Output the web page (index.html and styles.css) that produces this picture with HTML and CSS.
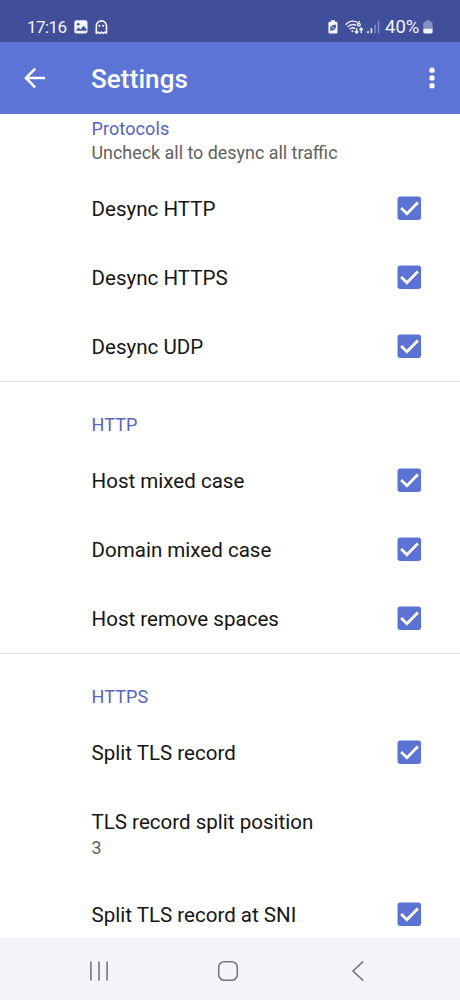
FILE: index.html
```html
<!DOCTYPE html>
<html lang="en">
<head>
<meta charset="utf-8">
<title>Settings</title>
<link rel="stylesheet" href="styles.css">
</head>
<body>
<svg class="defs" width="0" height="0">
  <symbol id="check" viewBox="0 0 24 24"><rect x="0.5" y="0.5" width="22.6" height="22.6" rx="2.6" fill="#5d72d5"/><path d="M4 11.600l5.500 5.500L20 6.200" fill="none" stroke="#fff" stroke-width="2.700"/></symbol>
</svg>
<div class="screen">
  <header class="status">
    <span class="clock">17:16</span>
    <svg class="s-image" width="14" height="14" viewBox="0 0 14 14"><rect x="0.3" y="0.3" width="13.2" height="13.2" rx="2.2" fill="#f1f4ff"/><circle cx="4.2" cy="4.2" r="1.3" fill="#414f9b"/><path d="M1.8 10.8l2.8-3.2 2 1.8 3-3.6 3 3.8v1.2z" fill="#414f9b"/></svg>
    <svg class="s-ghost" width="13" height="15" viewBox="0 0 13 15"><path d="M1.3 13.3V6a5.1 5.1 0 0 1 10.2 0v7.3l-1.8-1.2-1.6 1.4-1.7-1.4-1.7 1.4-1.6-1.4z" fill="none" stroke="#f1f4ff" stroke-width="1.6" stroke-linejoin="round"/><circle cx="4.4" cy="5.8" r="1.1" fill="#f1f4ff"/><circle cx="8.2" cy="5.8" r="1.1" fill="#f1f4ff"/></svg>
    <svg class="s-saver" width="10" height="14" viewBox="0 0 10 14"><path d="M3 .2h4v1.5h1.2A1.3 1.3 0 0 1 9.5 3v9.3a1.3 1.3 0 0 1-1.3 1.3H1.7A1.3 1.3 0 0 1 .4 12.3V3a1.3 1.3 0 0 1 1.3-1.3H3z" fill="#f1f4ff"/><path d="M2.3 10.5l4.800-4.800M2.700 8.800C2.300 6.500 4.500 5.400 7.400 5.400 7.500 8.500 6 10.400 3.600 9.700" fill="none" stroke="#414f9b" stroke-width="1.1"/></svg>
    <svg class="s-wifi" width="19" height="15" viewBox="0 0 19 15" fill="none" stroke="#f1f4ff" stroke-width="1.3"><path d="M.6 4.800C4 1 8.500.5 12 2.200M2.600 7.100C5 4.500 8.500 4 11.200 5.400M4.600 9.300C6.200 7.700 8.400 7.500 10 8.600"/><circle cx="7.400" cy="11.200" r="1" fill="#f1f4ff" stroke="none"/><path d="M14.800 1C13.200 2 12.500 3.300 12.500 4.700"/><circle cx="13.900" cy="4.800" r="1.400"/><path d="M11.600 8v5M9.800 11.300l1.800 2 1.800-2M16.200 13.300v-5M14.500 10l1.700-2 1.700 2"/></svg>
    <svg class="s-signal" width="13" height="14" viewBox="0 0 13 14"><path d="M1 11v2.300M4.400 8.300v5" stroke="#f1f4ff" stroke-width="1.500"/><path d="M8 4.800v8.500M11.500 .8v12.500" stroke="#8690c6" stroke-width="1.400"/></svg>
    <span class="percent">40%</span>
    <svg class="s-battery" width="10" height="14" viewBox="0 0 10 14"><path d="M3 .3h4v1.500h1.100A1.500 1.500 0 0 1 9.600 3.300V9H.3V3.300A1.500 1.500 0 0 1 1.800 1.800H3z" fill="#8790c3"/><path d="M.3 8.700h9.300v3.400a1.400 1.400 0 0 1-1.400 1.400H1.700A1.400 1.400 0 0 1 .3 12.100z" fill="#f1f4ff"/></svg>
  </header>
  <div class="appbar">
    <svg class="back" width="22" height="22" viewBox="0 0 22 22" fill="none" stroke="#fff" stroke-width="2.500"><path d="M21 11H2.500M11.200 1.700L1.900 11l9.300 9.300"/></svg>
    <h1>Settings</h1>
    <svg class="more" width="8" height="22" viewBox="0 0 8 22" fill="#fff"><circle cx="4" cy="3.300" r="2.700"/><circle cx="4" cy="11" r="2.700"/><circle cx="4" cy="18.700" r="2.700"/></svg>
  </div>
  <main>
    <section class="first">
      <div class="intro"><h2>Protocols</h2><p>Uncheck all to desync all traffic</p></div>
      <div class="row"><span>Desync HTTP</span><svg class="box"><use href="#check"/></svg></div>
      <div class="row"><span>Desync HTTPS</span><svg class="box"><use href="#check"/></svg></div>
      <div class="row"><span>Desync UDP</span><svg class="box"><use href="#check"/></svg></div>
    </section>
    <section class="group">
      <h2>HTTP</h2>
      <div class="row"><span>Host mixed case</span><svg class="box"><use href="#check"/></svg></div>
      <div class="row"><span>Domain mixed case</span><svg class="box"><use href="#check"/></svg></div>
      <div class="row"><span>Host remove spaces</span><svg class="box"><use href="#check"/></svg></div>
    </section>
    <section class="group">
      <h2>HTTPS</h2>
      <div class="row"><span>Split TLS record</span><svg class="box"><use href="#check"/></svg></div>
      <div class="row tall"><span>TLS record split position</span><p>3</p></div>
      <div class="row"><span>Split TLS record at SNI</span><svg class="box"><use href="#check"/></svg></div>
    </section>
  </main>
  <nav class="navbar">
    <svg width="20" height="22" viewBox="0 0 20 22" stroke="#77787b" stroke-width="1.600"><path d="M1.900 1.500v19M10 1.500v19M18.100 1.500v19"/></svg>
    <svg class="home" width="22" height="22" viewBox="0 0 22 22" fill="none" stroke="#77787b" stroke-width="1.600"><rect x="1.700" y="1.700" width="18.600" height="18.600" rx="5.500"/></svg>
    <svg width="14" height="22" viewBox="0 0 14 22" fill="none" stroke="#77787b" stroke-width="1.600"><path d="M12.300 1.400L2 11l10.300 9.600"/></svg>
  </nav>
</div>
</body>
</html>
```
FILE: styles.css
```css
* { box-sizing: border-box; }
body, h1, h2, p { margin: 0; }
body { font-family: Roboto, "Liberation Sans", sans-serif; background: #fff; }
.defs { display: block; height: 0; }
.screen { width: 460px; height: 1000px; overflow: hidden; display: flex; flex-direction: column; }
.status { height: 42px; flex: none; background: #414f9b; color: #f1f4ff; display: flex; align-items: center; padding: 12px 27px 0 27px; font-size: 17.5px; }
.status svg { flex: none; }
.clock { width: 40px; margin-right: 7px; font-size: 17px; letter-spacing: -0.6px; }
.s-ghost { margin-left: 7px; }
.s-saver { margin-left: auto; }
.s-wifi { margin-left: 7px; }
.s-signal { margin-left: 3px; }
.percent { margin-left: 5px; width: 38px; font-size: 18.5px; }
.appbar { height: 72px; flex: none; background: #5d74d7; color: #fff; display: flex; align-items: center; padding: 0 24px; }
.back { margin-right: 45px; }
.appbar h1 { font-size: 26px; font-weight: 500; line-height: 30px; padding-top: 2px; letter-spacing: 0.1px; }
.more { margin-left: auto; }
main { flex: 1; min-height: 0; overflow: hidden; color: #151515; }
.intro { height: 60px; padding: 3px 0 0 91.5px; }
h2 { font-size: 18px; font-weight: 400; letter-spacing: 0.1px; color: #5565bd; line-height: 24px; }
p { font-size: 17.9px; line-height: 24px; color: #606060; }
.row { height: 69px; display: flex; align-items: center; justify-content: space-between; padding: 0 38px 0 91.5px; font-size: 20.55px; line-height: 26px; }
.row span { padding-top: 1px; }
.box { width: 25px; height: 25px; flex: none; }
.group { border-top: 1px solid #dcdcdc; height: 272px; }
.group h2 { height: 64px; padding: 31px 0 0 91.5px; }
.row.tall { height: 93px; flex-direction: column; align-items: flex-start; justify-content: flex-start; padding-top: 21px; }
.row.tall p { padding-top: 1px; }
.navbar { height: 62px; flex: none; background: #f4f5f8; display: flex; justify-content: space-between; align-items: center; padding: 4px 95px 0 89px; }
.home { margin-right: 4px; }
```
